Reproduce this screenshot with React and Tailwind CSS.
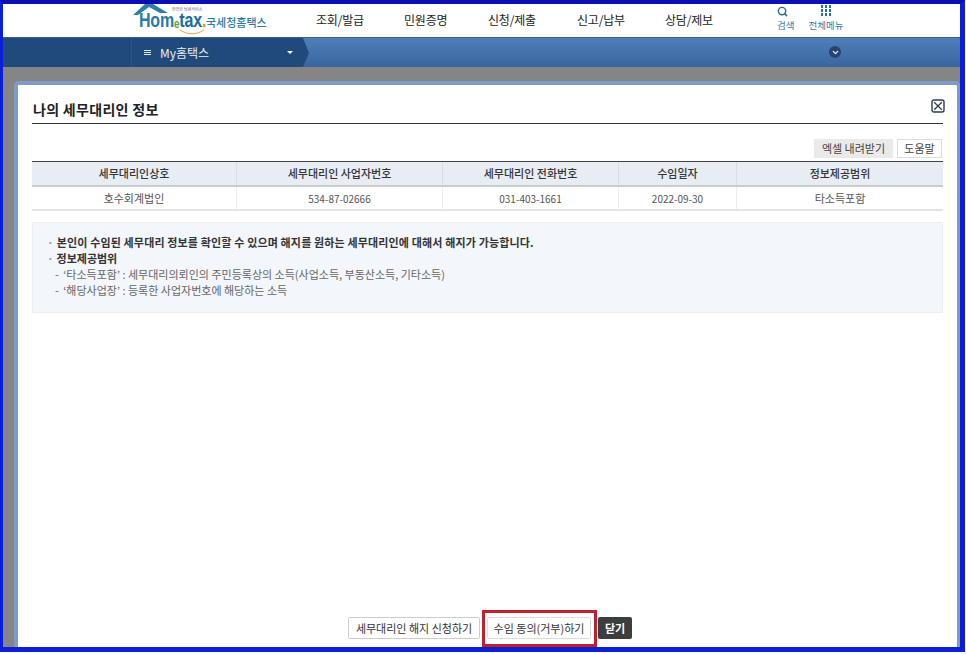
import React from 'react'
import { Search, ChevronDown } from 'lucide-react'

const navItems = [
  { label: '조회/발급', width: 'w-[88px]' },
  { label: '민원증명', width: 'w-[84px]' },
  { label: '신청/제출', width: 'w-[89px]' },
  { label: '신고/납부', width: 'w-[88px]' },
  { label: '상담/제보', width: 'w-[100px]' },
]

const columns = [
  { head: '세무대리인상호', value: '호수회계법인', width: 'w-[205px]' },
  { head: '세무대리인 사업자번호', value: '534-87-02666', width: 'w-[206px]', num: true },
  { head: '세무대리인 전화번호', value: '031-403-1661', width: 'w-[176px]', num: true },
  { head: '수임일자', value: '2022-09-30', width: 'w-[118px]', num: true },
  { head: '정보제공범위', value: '타소득포함', width: 'flex-1' },
]

const Logo = () => (
  <div className="relative w-[184px] h-full overflow-hidden shrink-0">
    <svg className="absolute left-0 top-0" width="40" height="14" viewBox="0 0 40 14">
      <path d="M1 11 L13 0 L21 0 L36 9 L28 9 L17 3 L6 11 Z" fill="#2c7fa8" />
    </svg>
    <svg className="absolute left-[47px] top-[25px]" width="26" height="6" viewBox="0 0 26 6">
      <path d="M1 1 C8 6 18 6 25 1" fill="none" stroke="#e3a83c" strokeWidth="1" />
    </svg>
    <span className="absolute left-[7px] top-[12px] text-[16px] leading-[10px] font-bold tracking-[-0.2px] text-[#2a7ba6] font-['Liberation_Sans',sans-serif] scale-y-125 whitespace-nowrap">
      Hom<span className="text-[10px] relative top-[1px] leading-[10px] text-[#5f9f3a]">e</span><span className="text-[#1c6d9c]">tax</span><span className="text-[#e0902c]">.</span>
    </span>
    <span className="absolute left-[40px] top-[3px] text-[4px] leading-[5px] text-[#5a6a7a] whitespace-nowrap">안전한 납세서비스</span>
    <span className="absolute left-[74px] top-[10px] text-[11px] leading-[16px] font-medium text-[#2a7ba6] whitespace-nowrap">국세청홈택스</span>
  </div>
)

const Header = () => (
  <div className="h-[33px] bg-white flex pl-[129px] shrink-0">
    <Logo />
    <nav className="flex items-center pb-[1px]">
      {navItems.map((item) => (
        <span key={item.label} className={`${item.width} text-[12px] text-[#222] tracking-[-0.2px]`}>{item.label}</span>
      ))}
    </nav>
    <div className="flex ml-[12px] text-[9.5px] leading-[12px] text-[#3b7b9e]">
      <div className="flex flex-col items-start w-[20px]">
        <Search size={11} strokeWidth={3.2} className="text-[#2a6f94] mt-[2px] mb-[2px]" />
        <span>검색</span>
      </div>
      <div className="flex flex-col items-center w-[36px] ml-[11px]">
        <div className="grid grid-cols-3 gap-[1.5px] mt-[1px] mb-[3.5px]">
          {Array(9).fill().map((_, index) => (
            <div key={index} className="w-[2.5px] h-[2.5px] bg-[#2a6f94]"></div>
          ))}
        </div>
        <span className="whitespace-nowrap">전체메뉴</span>
      </div>
    </div>
  </div>
)

const MenuBar = () => (
  <div className="h-[30px] shrink-0 flex bg-gradient-to-b from-[#4f80b9] to-[#39659e] border-t border-[#35608f]">
    <div className="w-[299px] bg-[#214a7c] flex items-center text-white">
      <div className="w-[129px] h-full border-r border-[#2a5484]"></div>
      <div className="ml-[12px] w-[7px] flex flex-col gap-[1px]">
        <div className="h-px bg-[#dfe7f1]"></div>
        <div className="h-px bg-[#dfe7f1]"></div>
        <div className="h-px bg-[#dfe7f1]"></div>
      </div>
      <span className="ml-[9px] w-[50px] text-[12px] text-[#e8eef6] whitespace-nowrap">My홈택스</span>
      <span className="ml-[77px] w-0 h-0 border-x-[3px] border-x-transparent border-t-[3px] border-t-white"></span>
    </div>
    <svg width="8" height="29" viewBox="0 0 8 29" className="shrink-0">
      <path d="M0 0 L1 0 L7 15 L1 29 L0 29 Z" fill="#214a7c" />
    </svg>
    <div className="ml-[519px] mt-[8px] w-[12px] h-[12px] rounded-full bg-[#27446f] flex items-center justify-center">
      <ChevronDown size={9} strokeWidth={3} className="text-white" />
    </div>
  </div>
)

const InfoTable = () => (
  <div className="border-t border-[#444] mt-[3px] text-[11px] text-center">
    <div className="flex h-[25px] bg-[#e8edf4] border-b-2 border-[#c8ccd2] text-[#333] font-medium">
      {columns.map((col, index) => (
        <div key={col.head} className={`${col.width} flex items-center justify-center ${index < 4 ? 'border-r border-[#d9dee5]' : ''}`}>{col.head}</div>
      ))}
    </div>
    <div className="flex h-[24px] border-b-2 border-[#e2e4e8] text-[#555]">
      {columns.map((col, index) => (
        <div key={col.head} className={`${col.width} ${col.num ? 'text-[10px]' : ''} flex items-center justify-center ${index < 4 ? 'border-r border-[#ebedf0]' : ''}`}>{col.value}</div>
      ))}
    </div>
  </div>
)

const Notice = () => (
  <div className="mt-[11px] h-[91px] bg-[#f3f6fb] border border-[#eceff3] pl-[14px] pt-[11px] text-[11px] leading-[16px]">
    <p className="font-bold text-[#333] tracking-[0.15px]"><span className="text-[#999] mr-[3px]">·</span>본인이 수임된 세무대리 정보를 확인할 수 있으며 해지를 원하는 세무대리인에 대해서 해지가 가능합니다.</p>
    <p className="font-bold text-[#333]"><span className="text-[#999] mr-[3px]">·</span>정보제공범위</p>
    <p className="text-[#666] ml-[8px]"><span className="mr-[2px]">-</span> ‘타소득포함’ : 세무대리의뢰인의 주민등록상의 소득(사업소득, 부동산소득, 기타소득)</p>
    <p className="text-[#666] ml-[8px]"><span className="mr-[2px]">-</span> ‘해당사업장’ : 등록한 사업자번호에 해당하는 소득</p>
  </div>
)

const Modal = () => (
  <div className="h-full bg-white border-l-[4px] border-r-[3px] border-t-[4px] border-[#7f9cc6] rounded-t-[5px] flex flex-col px-[14px]">
    <div className="h-[39px] flex items-end justify-between border-b border-[#333] shrink-0">
      <h1 className="text-[14px] leading-[20px] font-bold text-[#222] tracking-[0.3px] mb-[4px] ml-[1px]">나의 세무대리인 정보</h1>
      <svg width="14" height="14" viewBox="0 0 14 14" className="mb-[10px] mr-[-2px]">
        <rect x="1" y="1" width="12" height="12" rx="2" fill="none" stroke="#2c3e50" strokeWidth="1.4" />
        <path d="M3.2 3.2 L10.8 10.8 M10.8 3.2 L3.2 10.8" stroke="#2c3e50" strokeWidth="1.3" />
      </svg>
    </div>
    <div className="flex justify-end gap-[4px] mt-[15px] mr-px">
      <button className="w-[79px] h-[19px] bg-[#eaeaea] text-[11px] text-[#444] flex items-center justify-center">엑셀 내려받기</button>
      <button className="w-[45px] h-[19px] bg-white border border-[#ddd] text-[11px] text-[#444] flex items-center justify-center">도움말</button>
    </div>
    <InfoTable />
    <Notice />
    <div className="flex-1"></div>
    <div className="h-[38px] flex items-center justify-center pl-[5px] shrink-0">
      <button className="w-[132px] h-[22px] bg-white border border-[#ccc] rounded-[2px] text-[11px] text-[#333] flex items-center justify-center">세무대리인 해지 신청하기</button>
      <div className="ml-[2px] w-[115px] h-[37px] border-[3px] border-[#c0202e] flex items-center justify-start pl-[2px]">
        <button className="w-[104px] h-[22px] bg-white border border-[#ddd] rounded-[2px] text-[11px] text-[#333] flex items-center justify-center">수임 동의(거부)하기</button>
      </div>
      <button className="ml-[1px] w-[34px] h-[22px] bg-[#3d3d3d] rounded-[2px] text-[11px] font-bold text-white flex items-center justify-center">닫기</button>
    </div>
  </div>
)

const App = () => {
  return (
    <div className="w-[966px] h-[654px] bg-white overflow-hidden font-['Noto_Sans_CJK_KR','Noto_Sans',sans-serif]">
      <div className="w-[965px] h-[652px] border-[#0b1fd6] border-l-[3px] border-r-[5px] border-b-[5px] border-t-[4px] border-t-[#0a0fb0] flex flex-col">
        <Header />
        <MenuBar />
        <div className="flex-1 min-h-0 bg-[#858585] pt-[14px] pl-[11px]">
          <Modal />
        </div>
      </div>
    </div>
  )
}

export default App
